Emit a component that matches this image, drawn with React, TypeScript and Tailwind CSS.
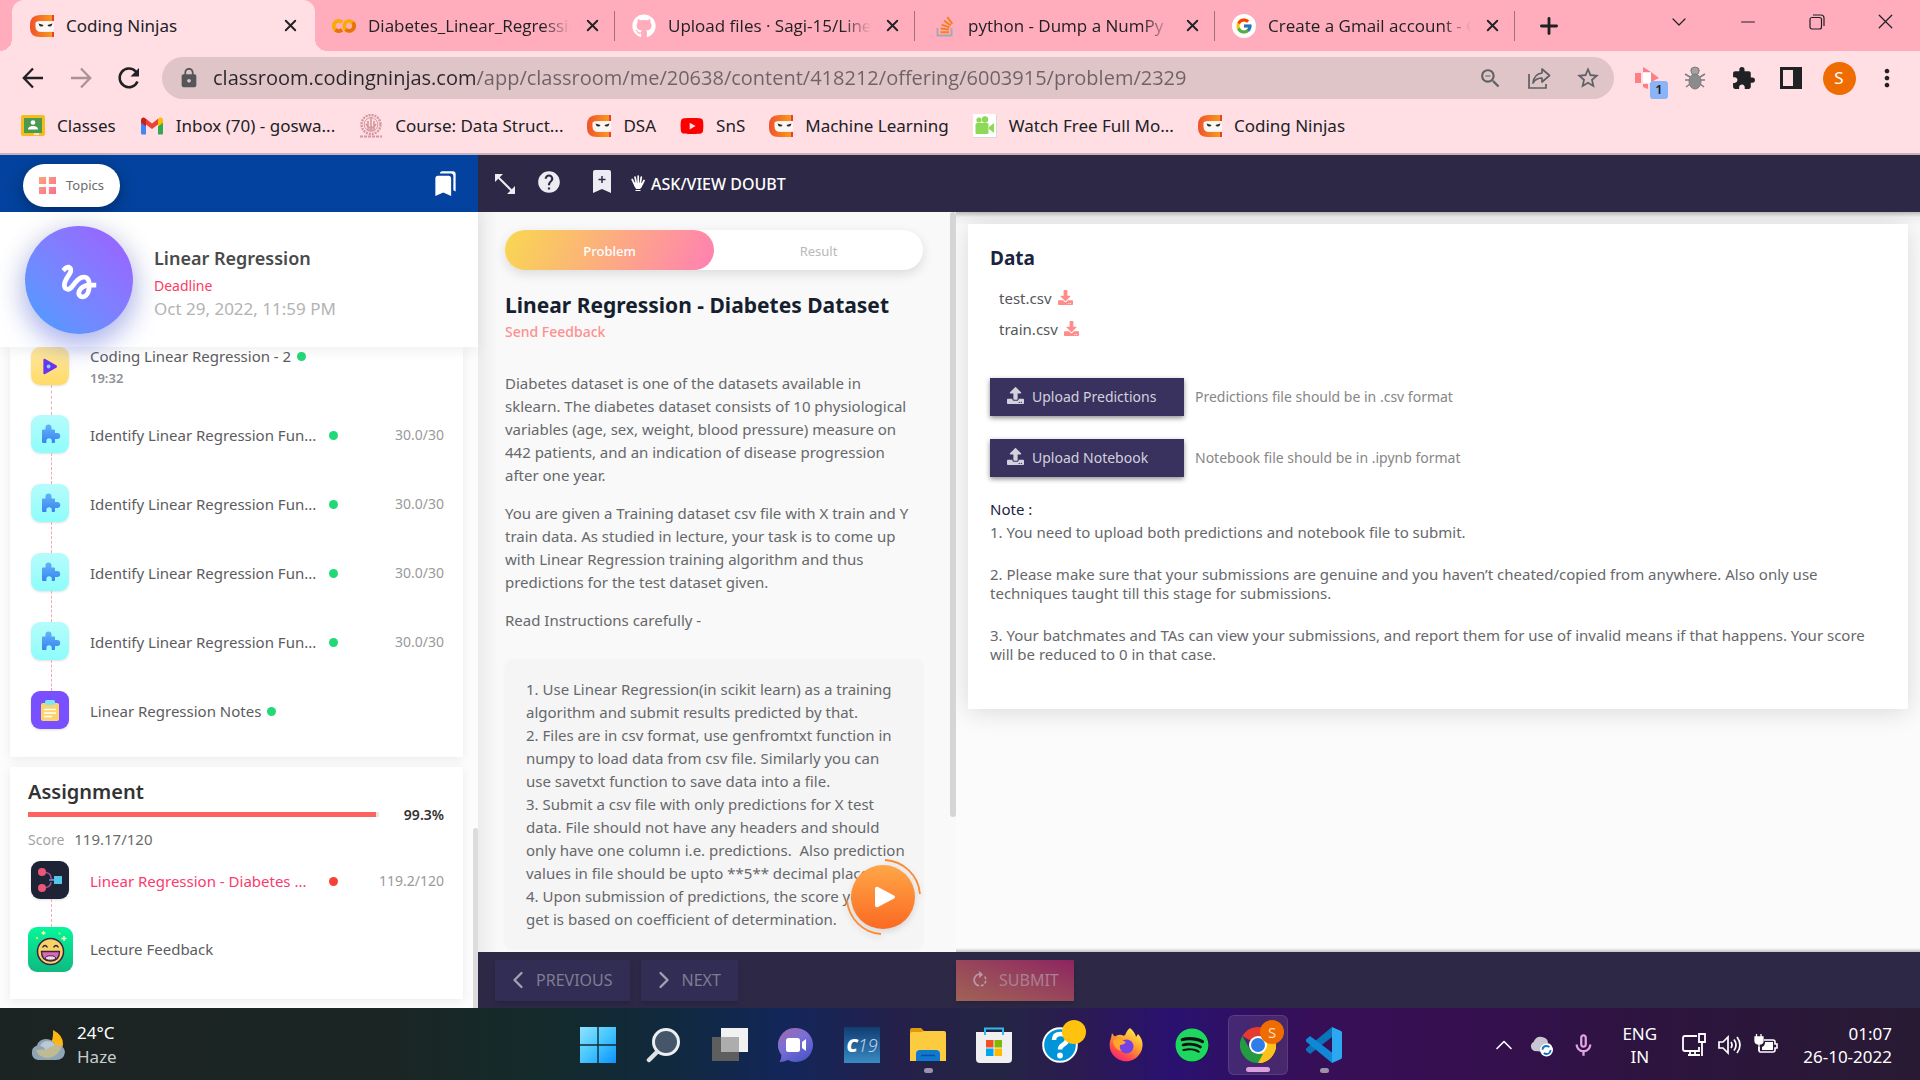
import type { ReactNode } from "react";
import { ChevronDown, ChevronLeft, ChevronRight, ChevronUp, Minus, Plus, X } from "lucide-react";
import { FaDownload, FaGithub, FaSpotify, FaUpload, FaYoutube } from "react-icons/fa";
import { FcGoogle } from "react-icons/fc";
import {
  MdBookmarks,
  MdExtension,
  MdGesture,
  MdHelp,
  MdLock,
  MdMoreVert,
  MdOutlineMicNone,
  MdOutlineZoomOut,
  MdRotateRight,
  MdStarBorder,
} from "react-icons/md";

/* ---------- Favicons ---------- */

function NinjaIcon() {
  return (
    <svg viewBox="0 0 24 24" className="size-6 shrink-0" aria-hidden="true">
      <defs>
        <linearGradient id="ninja" x1="0" x2="1">
          <stop offset="0" stopColor="#f0512b" />
          <stop offset="1" stopColor="#f9a01b" />
        </linearGradient>
      </defs>
      <path d="M24 1H10Q0 1 0 11v3q0 9 10 9h14v-5H11q-5 0-5-5v-2q0-4 5-4h13z" fill="url(#ninja)" />
      <path d="M22 1h2v6h-2zM22 18h2v5h-2z" fill="#e8402c" />
      <path d="M5.500 9q0-1.500 2-1.500h16.500v8q-1 2-3 2H11q-5.500 0-5.500-5z" fill="#fdf7f4" />
      <path d="M8.500 9.500l5 1.500q-.5 1.800-2.500 1.600-2-.4-2.500-3.100zM22.500 9.500l-5 1.500q.5 1.800 2.500 1.600 2-.4 2.500-3.100z" fill="#2b2b2b" />
    </svg>
  );
}

function ColabIcon() {
  return (
    <svg viewBox="0 0 24 24" className="size-6 shrink-0" fill="none" strokeWidth="3.800" aria-hidden="true">
      <path d="M10 8.200a5 5 0 1 0 0 7.600" stroke="#f9ab00" />
      <path d="M3.500 15.800A5 5 0 0 0 10 15.800" stroke="#e8710a" />
      <circle cx="17.200" cy="12" r="4.900" stroke="#f9ab00" />
      <path d="M13.700 15.500a4.900 4.900 0 0 0 7-7" stroke="#e8710a" />
    </svg>
  );
}

function StackOverflowIcon() {
  return (
    <svg viewBox="0 0 24 24" className="size-6 shrink-0" fill="none" aria-hidden="true">
      <path d="M5.500 14v7.500h14V14" stroke="#a8a8ad" strokeWidth="2" />
      <path d="M8.500 18.200h8.500M8.600 14.500l8.400 1M9.600 10.600l8 2.800M12 6.600l6.800 4.900M15.300 3l5 6.800" stroke="#f48024" strokeWidth="2" />
    </svg>
  );
}

function ClassroomIcon() {
  return (
    <svg viewBox="0 0 24 24" className="size-6 shrink-0" aria-hidden="true">
      <rect y="1" width="24" height="21" rx="2" fill="#f6bc1c" />
      <rect x="3" y="4" width="18" height="15" fill="#4c9a50" />
      <circle cx="12" cy="8.500" r="2.300" fill="#fff" />
      <path d="M7 15.500q0-3.500 5-3.500t5 3.500z" fill="#fff" />
      <path d="M13 19h5v2h-5z" fill="#e6e6e6" />
    </svg>
  );
}

function GmailIcon() {
  return (
    <svg viewBox="0 0 24 24" className="size-6 shrink-0" aria-hidden="true">
      <path d="M1 6v13.500q0 1 1 1h4V10z" fill="#4285f4" />
      <path d="M23 6v13.500q0 1-1 1h-4V10z" fill="#34a853" />
      <path d="M6 10.500V4.800l6 4.600 6-4.600v5.700L12 15z" fill="#ea4335" />
      <path d="M1 6.500v2.300l5 3.700V4.800L4.600 3.900C3 2.900 1 4 1 6.500z" fill="#c5221f" />
      <path d="M23 6.500v2.300l-5 3.700V4.800l1.400-.9C21 2.900 23 4 23 6.500z" fill="#fbbc04" />
    </svg>
  );
}

function CrestIcon() {
  return (
    <svg viewBox="0 0 24 24" className="size-6 shrink-0" fill="none" stroke="#d5969e" aria-hidden="true">
      <circle cx="12" cy="10.500" r="9.500" strokeWidth="2.400" strokeDasharray="2 1" />
      <circle cx="12" cy="10.500" r="6.800" />
      <path d="M12 3v13M9 7v8M15 7v8M7 10q5 8 10 0M8 16h8" strokeWidth="1.600" />
      <path d="M1 22.500h22" strokeWidth="1.800" strokeDasharray="3 1" />
    </svg>
  );
}

function CameraIcon() {
  return (
    <svg viewBox="0 0 24 24" className="size-6 shrink-0" aria-hidden="true">
      <path d="M0 0h24v24H0z" fill="#d9d9d9" />
      <path d="M0 0h23v23H0z" fill="#fff" />
      <g fill="#8ed857">
        <circle cx="6" cy="6" r="2.600" />
        <circle cx="12" cy="5.500" r="3.200" />
        <rect x="2.500" y="9" width="13" height="11" rx="1.500" />
        <path d="M16 13l5-4v10l-5-4z" />
      </g>
    </svg>
  );
}

/* ---------- Browser chrome ---------- */

const tabs: { title: string; icon: ReactNode }[] = [
  { title: "Diabetes_Linear_Regressio", icon: <ColabIcon /> },
  { title: "Upload files · Sagi-15/Line", icon: <FaGithub className="size-6 shrink-0 text-white" /> },
  { title: "python - Dump a NumPy", icon: <StackOverflowIcon /> },
  {
    title: "Create a Gmail account - G",
    icon: (
      <span className="flex size-6 shrink-0 items-center justify-center rounded-full bg-white">
        <FcGoogle className="size-[18px]" />
      </span>
    ),
  },
];

const bookmarks: { title: string; icon: ReactNode }[] = [
  { title: "Classes", icon: <ClassroomIcon /> },
  { title: "Inbox (70) - goswa...", icon: <GmailIcon /> },
  { title: "Course: Data Struct...", icon: <CrestIcon /> },
  { title: "DSA", icon: <NinjaIcon /> },
  { title: "SnS", icon: <FaYoutube className="size-6 shrink-0 text-[#ff0000]" /> },
  { title: "Machine Learning", icon: <NinjaIcon /> },
  { title: "Watch Free Full Mo...", icon: <CameraIcon /> },
  { title: "Coding Ninjas", icon: <NinjaIcon /> },
];

function TabStrip() {
  return (
    <div className="flex h-[51px] bg-[#ffadbc] pl-3">
      <div className="relative flex w-[303px] shrink-0 items-center gap-3 rounded-t-xl bg-[#ffdee4] pl-[18px] pr-[15px]">
        <span className="absolute bottom-0 -left-3 size-3 bg-[radial-gradient(circle_at_0_0,#ffadbc_12px,#ffdee4_12px)]" />
        <span className="absolute bottom-0 -right-3 size-3 bg-[radial-gradient(circle_at_100%_0,#ffadbc_12px,#ffdee4_12px)]" />
        <NinjaIcon />
        <span className="flex-1 text-[17px]">Coding Ninjas</span>
        <button aria-label="Close tab"><X className="size-[19px]" strokeWidth={2.400} /></button>
      </div>
      {tabs.map((t) => (
        <div key={t.title} className="flex w-[300px] shrink-0 items-center">
          <div className="flex min-w-0 flex-1 items-center pl-[17px] pr-3">
            {t.icon}
            <span className="ml-3 mr-2 flex-1 overflow-hidden whitespace-nowrap font-['Open_Sans',sans-serif] text-[17px] [mask-image:linear-gradient(to_right,#000_84%,transparent_98%)]">
              {t.title}
            </span>
            <button aria-label="Close tab"><X className="size-[19px]" strokeWidth={2.400} /></button>
          </div>
          <span className="h-[30px] w-px bg-[#a0707c]" />
        </div>
      ))}
      <button aria-label="New tab" className="ml-[21px]"><Plus className="size-[26px]" strokeWidth={2.600} /></button>
      <div className="ml-auto flex h-[43px] items-center">
        <button aria-label="Search tabs" className="flex w-[69px] justify-center">
          <ChevronDown className="size-6" strokeWidth={1.200} />
        </button>
        <button aria-label="Minimize" className="flex w-[69px] justify-center"><Minus className="size-[22px]" strokeWidth={1.200} /></button>
        <button aria-label="Restore" className="flex w-[69px] justify-center">
          <svg viewBox="0 0 16 16" className="size-4" fill="none" stroke="currentColor" strokeWidth="1.200">
            <rect x="1" y="3.500" width="11.500" height="11.500" rx="2" />
            <path d="M4 1h8q3 0 3 3v8" />
          </svg>
        </button>
        <button aria-label="Close" className="flex w-[69px] justify-center"><X className="size-[25px]" strokeWidth={1.200} /></button>
      </div>
    </div>
  );
}

function Toolbar() {
  return (
    <div className="flex h-[54px] items-center bg-[#ffdee4]">
      <div className="flex w-[162px] shrink-0 items-center justify-between pl-[21px] pr-[21px]">
        <button aria-label="Back">
          <svg viewBox="0 0 24 24" className="size-6" fill="none" stroke="currentColor" strokeWidth="2.300"><path d="M22 12H3M12 2.500L2.800 12l9.200 9.500" /></svg>
        </button>
        <button aria-label="Forward" className="text-[#ab9298]">
          <svg viewBox="0 0 24 24" className="size-6" fill="none" stroke="currentColor" strokeWidth="2.300"><path d="M2 12h19M12 2.500l9.200 9.500-9.200 9.500" /></svg>
        </button>
        <button aria-label="Reload">
          <svg viewBox="0 0 24 24" className="size-6" fill="none" stroke="currentColor" strokeWidth="2.500">
            <path d="M20.500 15.500A9.300 9.300 0 1 1 18.600 5.400l2 2.200" />
            <path d="M22 2v8.500h-8.500z" fill="currentColor" stroke="none" />
          </svg>
        </button>
      </div>
      <div className="flex h-[42px] min-w-0 flex-1 items-center rounded-full bg-[#dfc4c8] pl-4 pr-[13px] text-[#5f6064]">
        <MdLock className="size-[22px] shrink-0 text-[#54565a]" />
        <input
          aria-label="Address"
          defaultValue="classroom.codingninjas.com/app/classroom/me/20638/content/418212/offering/6003915/problem/2329"
          className="ml-[13px] min-w-0 flex-1 bg-[linear-gradient(to_right,#2b2629_262px,#6e6266_262px)] bg-clip-text font-['Open_Sans',sans-serif] text-xl text-transparent outline-none"
        />
        <div className="flex items-center gap-6">
          <button aria-label="Zoom"><MdOutlineZoomOut className="size-[25px]" /></button>
          <button aria-label="Share">
            <svg viewBox="0 0 24 24" className="size-6" fill="none" stroke="currentColor" strokeWidth="1.700">
              <path d="M2 8v14h17v-4" />
              <path d="M15 7V3l7.500 6.500L15 16v-4q-6 0-9 5 1-9 9-10z" strokeLinejoin="round" />
            </svg>
          </button>
          <button aria-label="Bookmark this page"><MdStarBorder className="size-[26px]" /></button>
        </div>
      </div>
      <div className="flex shrink-0 items-center pl-[9px] pr-[9px]">
        <button aria-label="Recorder extension" className="relative flex w-12 justify-center">
          <svg viewBox="0 0 24 24" className="size-6">
            <path d="M0 7h6v10H0zM8 1l8 5H8zM8 18h5v5l-5-2z" fill="#ff7d85" />
            <path d="M8 7h8v10H8z" fill="#fff" />
            <path d="M16 6l8 6-8 4z" fill="#ff7d85" />
          </svg>
          <span className="absolute -bottom-[9px] left-[27px] flex h-[18px] w-[18px] items-center justify-center rounded-[3px] bg-[#8ab4f8] text-[13px] font-semibold">1</span>
        </button>
        <button aria-label="Debug extension" className="flex w-12 justify-center">
          <svg viewBox="0 0 24 24" className="size-6" stroke="#7d7d7d">
            <path d="M2 8l5 3M2 14h5M3 21l4-3M22 8l-5 3M22 14h-5M21 21l-4-3M9 2L8 5M15 2l1 3" fill="none" strokeWidth="1.500" />
            <circle cx="12" cy="5" r="4" fill="#a3a3a3" />
            <ellipse cx="12" cy="15.500" rx="6" ry="7.500" fill="#8b8b8b" />
          </svg>
        </button>
        <button aria-label="Extensions" className="flex w-12 justify-center"><MdExtension className="size-[25px]" /></button>
        <button aria-label="Side panel" className="flex w-12 justify-center">
          <svg viewBox="0 0 22 22" className="size-[22px]"><path d="M0 0h22v22H0zM3 3v16h10V3z" fill="currentColor" fillRule="evenodd" /></svg>
        </button>
        <button aria-label="Profile" className="flex w-12 justify-center">
          <span className="flex size-[33px] items-center justify-center rounded-full bg-[#ef6c00] text-[17px] text-white">S</span>
        </button>
        <button aria-label="Menu" className="flex w-12 justify-center"><MdMoreVert className="size-7" /></button>
      </div>
    </div>
  );
}

function BookmarkBar() {
  return (
    <nav className="flex h-[50px] items-start gap-6 overflow-hidden whitespace-nowrap border-b-2 border-[#c6b3bb] bg-[#ffdee4] pl-[21px] pt-2">
      {bookmarks.map((b, i) => (
        <a key={i} href="#" className="flex items-center gap-3 text-[17px]">
          {b.icon}
          {b.title}
        </a>
      ))}
    </nav>
  );
}

/* ---------- Sidebar ---------- */

function VideoTile() {
  return (
    <span className="flex size-[38px] items-center justify-center rounded-[9px] bg-linear-to-b from-[#ffeaa0] to-[#ffda65] shadow-sm">
      <svg viewBox="0 0 16 18" className="h-[17px] w-4">
        <path d="M1 2q0-2 2-1l12 7q1 1 0 2L3 17q-2 1-2-1z" fill="#6a35f0" />
        <circle cx="6.500" cy="9" r="2" fill="#7dd8ff" />
      </svg>
    </span>
  );
}

function PuzzleTile() {
  return (
    <span className="flex size-[38px] items-center justify-center rounded-[9px] bg-linear-to-b from-[#b5fcfb] to-[#8cfdfb] shadow-sm">
      <svg viewBox="0 0 20 20" className="ml-0.5 size-5">
        <defs>
          <linearGradient id="pz" x1="0" x2="0" y1="0" y2="1">
            <stop offset="0" stopColor="#62b4fb" />
            <stop offset="1" stopColor="#3b83ef" />
          </linearGradient>
        </defs>
        <path d="M1 6.500q0-1 1-1h2.500V3.500a3 3 0 0 1 6 0v2H13q1 0 1 1V9h2.200a3 3 0 0 1 0 6H14v3q0 1-1 1h-2.200v-2a2.700 2.700 0 0 0-5.400 0v2H2q-1 0-1-1z" fill="url(#pz)" />
      </svg>
    </span>
  );
}

function NotesTile() {
  return (
    <span className="flex size-[38px] items-center justify-center rounded-[9px] bg-[#7950ff] shadow-sm">
      <svg viewBox="0 0 18 21" className="h-[21px] w-[18px]">
        <rect y="3" width="18" height="18" rx="2" fill="#fcd46b" />
        <rect x="4" width="10" height="5" rx="1.500" fill="#7ce6fb" />
        <path d="M3 9.500h12M3 13h12M3 16.500h8" stroke="#fff" strokeWidth="1.600" />
      </svg>
    </span>
  );
}

function GraphTile() {
  return (
    <span className="flex size-[38px] items-center justify-center rounded-[9px] bg-[#1e2436] shadow-sm">
      <svg viewBox="0 0 26 26" className="size-[26px]" fill="none">
        <path d="M5 5q9 0 9 6 0 2 5 2M5 21q9 0 9-6" stroke="#b0489a" strokeWidth="1.500" />
        <path d="M12 13h8" stroke="#4aa3e0" strokeWidth="1.500" />
        <circle cx="5" cy="5" r="4" fill="#ef5676" />
        <circle cx="5" cy="21" r="4" fill="#ef5676" />
        <rect x="17" y="9" width="8" height="8" fill="#55c6e8" />
      </svg>
    </span>
  );
}

function FeedbackTile() {
  return (
    <svg viewBox="0 0 45 45" className="size-[45px] rounded-[9px]">
      <defs>
        <linearGradient id="fb" x1="0" x2="0" y1="0" y2="1">
          <stop offset="0" stopColor="#04f79b" />
          <stop offset="1" stopColor="#10b981" />
        </linearGradient>
      </defs>
      <path d="M0 0h45v45H0z" fill="url(#fb)" />
      <circle cx="22.500" cy="24.500" r="13" fill="#f7d264" stroke="#3d2240" strokeWidth="1.500" />
      <path d="M14.500 20.500q2.500-4 5 0M25.500 20.500q2.500-4 5 0" stroke="#3d2240" strokeWidth="1.400" fill="none" />
      <path d="M13.500 24.500h18q0 9.500-9 9.500t-9-9.500z" fill="#d76bb5" stroke="#3d2240" strokeWidth="1.400" />
      <ellipse cx="22.500" cy="31" rx="5" ry="2.200" fill="#f5d9e8" stroke="#3d2240" />
      <path d="M15.500 4v4M13.500 6h4M36 9v5M33.500 11.500h5" stroke="#f5fbb0" strokeWidth="1.400" />
      <circle cx="9" cy="11" r="1.200" fill="#c8f55a" />
      <circle cx="31.500" cy="6.500" r="1" fill="#c8f55a" />
    </svg>
  );
}

type Item = { title: string; tile: ReactNode; time?: string; score?: string };

const items: Item[] = [
  { title: "Coding Linear Regression - 2", tile: <VideoTile />, time: "19:32" },
  ...[1, 2, 3, 4].map(() => ({
    title: "Identify Linear Regression Fun...",
    tile: <PuzzleTile />,
    score: "30.0/30",
  })),
  { title: "Linear Regression Notes", tile: <NotesTile /> },
];

function LessonRow({ item, last }: { item: Item; last: boolean }) {
  return (
    <li className="flex">
      <div className="flex w-[59px] flex-col items-start">
        {item.tile}
        {!last && (
          <span className={item.time ? "ml-5 h-[30px] border-l border-dashed border-[#f4a9ae]" : "ml-5 h-[31px] border-l border-dashed border-[#f4a9ae]"} />
        )}
      </div>
      <a href="#" className="flex h-10 flex-1 items-center text-[#5b5c60]">
        <span>
          <span className="flex items-center text-[15px] leading-[22px]">
            <span className={item.score ? "w-[239px] whitespace-nowrap" : "mr-[6px] whitespace-nowrap"}>{item.title}</span>
            <span className="size-[9px] rounded-full bg-[#22d978]" />
          </span>
          {item.time && <span className="block text-[13px] leading-[22px] font-semibold text-[#8f8f96]">{item.time}</span>}
        </span>
        {item.score && <span className="ml-auto text-sm text-[#9a9a9a]">{item.score}</span>}
      </a>
    </li>
  );
}

function Sidebar() {
  return (
    <aside className="flex min-h-0 flex-col bg-[#fcfcfc]">
      <div className="flex h-[57px] shrink-0 items-center justify-between bg-[#03439f] pl-[23px] pr-[19px]">
        <button className="mt-1 flex h-[43px] items-center gap-[10px] rounded-full bg-white px-4 text-[13px] text-[#6b6b6b] shadow-[0_4px_16px_rgba(0,0,0,0.35)]">
          <svg viewBox="0 0 18 18" className="size-[17px]">
            <defs>
              <linearGradient id="tp" x1="0" x2="1" y1="0" y2="1">
                <stop offset="0" stopColor="#fba37a" />
                <stop offset="1" stopColor="#fb6f92" />
              </linearGradient>
            </defs>
            <path d="M0 0h7.500v7.500H0zM10.500 0H18v7.500h-7.500zM0 10.500h7.500V18H0zM10.500 10.500H18V18h-7.500z" fill="url(#tp)" />
          </svg>
          Topics
        </button>
        <button aria-label="Saved items" className="text-white"><MdBookmarks className="size-[27px]" /></button>
      </div>

      <div className="relative z-10 flex h-[135px] shrink-0 items-center bg-white pl-[25px] shadow-[0_4px_12px_rgba(0,0,0,0.06)]">
        <span className="flex size-[108px] items-center justify-center rounded-full bg-linear-to-tr from-[#3f9fff] to-[#9d5cff] text-white shadow-[0_12px_28px_rgba(90,110,255,0.4),0_4px_30px_rgba(0,0,0,0.15)]">
          <MdGesture className="mt-1 size-[46px]" />
        </span>
        <div className="ml-[21px] mt-1">
          <h2 className="text-lg leading-7 font-semibold text-[#4a4a4a]">Linear Regression</h2>
          <p className="mt-0.5 text-sm leading-6 text-[#ff3a62]">Deadline</p>
          <p className="text-[17px] leading-[22px] text-[#b3b3b3]">Oct 29, 2022, 11:59 PM</p>
        </div>
      </div>

      <div className="flex min-h-0 flex-1 overflow-hidden">
        <div className="min-w-0 flex-1 pl-[10px] pr-[10px]">
          <section className="bg-white pb-[26px] pl-[21px] pr-[19px] shadow-[0_2px_10px_rgba(0,0,0,0.07)]">
            <ul>
              {items.map((it, i) => (
                <LessonRow key={i} item={it} last={i === items.length - 1} />
              ))}
            </ul>
          </section>
          <section className="mt-[10px] bg-white pb-[27px] pl-[18px] pr-[19px] pt-[11px] shadow-[0_2px_10px_rgba(0,0,0,0.07)]">
            <h3 className="text-xl leading-7 font-semibold text-[#333]">Assignment</h3>
            <div className="flex h-[18px] items-center justify-between">
              <div className="mr-[25px] mb-[2px] h-[5px] flex-1 bg-[#e5e5e5]"><div className="h-full w-[99.3%] bg-[#ff625f]" /></div>
              <span className="text-sm font-semibold text-[#333]">99.3%</span>
            </div>
            <p className="mt-[3px] text-[15px] leading-6 text-[#6b6b6b]">
              <span className="mr-[10px] text-sm text-[#a3a3a3]">Score</span>119.17/120
            </p>
            <div className="flex pl-[3px] pt-[10px]">
              <div className="flex w-[59px] flex-col items-start">
                <GraphTile />
                <span className="ml-5 h-7 border-l border-dashed border-[#f4a9ae]" />
              </div>
              <a href="#" className="flex h-10 flex-1 items-center text-[15px] text-[#fb3a6e]">
                <span className="w-[239px] whitespace-nowrap">Linear Regression - Diabetes ...</span>
                <span className="size-[9px] rounded-full bg-[#f44336]" />
                <span className="ml-auto text-sm text-[#9a9a9a]">119.2/120</span>
              </a>
            </div>
            <a href="#" className="flex items-center gap-[17px] text-[15px] text-[#5b5c60]">
              <FeedbackTile />
              Lecture Feedback
            </a>
          </section>
        </div>
        <div className="flex w-[5px] flex-col justify-end"><span className="h-[180px] rounded-t bg-[#dcdcdc]" /></div>
      </div>
    </aside>
  );
}

/* ---------- Problem ---------- */

const intro = `Diabetes dataset is one of the datasets available in
sklearn. The diabetes dataset consists of 10 physiological
variables (age, sex, weight, blood pressure) measure on
442 patients, and an indication of disease progression
after one year.`;

const task = `You are given a Training dataset csv file with X train and Y
train data. As studied in lecture, your task is to come up
with Linear Regression training algorithm and thus
predictions for the test dataset given.`;

const instructions = `1. Use Linear Regression(in scikit learn) as a training
algorithm and submit results predicted by that.
2. Files are in csv format, use genfromtxt function in
numpy to load data from csv file. Similarly you can
use savetxt function to save data into a file.
3. Submit a csv file with only predictions for X test
data. File should not have any headers and should
only have one column i.e. predictions.  Also prediction
values in file should be upto **5** decimal places.
4. Upon submission of predictions, the score you
get is based on coefficient of determination.`;

function Problem() {
  return (
    <section className="relative flex min-h-0 overflow-hidden bg-[#f9f9f9] bg-[linear-gradient(to_right,#ececec,#f9f9f9_20px)]">
      <div className="min-w-0 flex-1 pl-[27px] pr-[27px] pt-[18px] text-[15px] text-[#66686b]">
        <div role="tablist" className="flex h-10 rounded-full bg-white text-[13px] shadow-[0_4px_12px_rgba(0,0,0,0.12)]">
          <button role="tab" aria-selected="true" className="flex-1 rounded-full bg-[linear-gradient(115deg,#f9d84f,#ff80b3)] pt-[3px] font-medium text-white">Problem</button>
          <button role="tab" aria-selected="false" className="flex-1 pt-[3px] text-[#b9b9b9]">Result</button>
        </div>
        <h1 className="mt-[19px] whitespace-nowrap text-[21px] leading-8 font-bold text-[#161f30]">Linear Regression - Diabetes Dataset</h1>
        <button className="block text-sm leading-[22px] font-medium text-[#ff8f8f]">Send Feedback</button>
        <p className="mt-[29px] whitespace-pre leading-[23px]">{intro}</p>
        <p className="mt-[15px] whitespace-pre leading-[23px]">{task}</p>
        <p className="mt-[15px] leading-[23px]">Read Instructions carefully -</p>
        <div className="mt-7 whitespace-pre rounded-lg bg-[#f5f5f5] py-[18px] pl-[21px] leading-[23px] shadow-[0_0_3px_rgba(0,0,0,0.04)]">{instructions}</div>
      </div>
      <div className="w-[6px]"><div className="h-[605px] rounded-full bg-[#d5d5d5]" /></div>
      <button aria-label="Play" className="absolute bottom-[15px] right-[33px]">
        <svg viewBox="0 0 80 80" className="size-20 drop-shadow-md">
          <defs>
            <linearGradient id="pl" x1="0" x2="0" y1="0" y2="1">
              <stop offset="0" stopColor="#ffa648" />
              <stop offset="1" stopColor="#fb6a21" />
            </linearGradient>
          </defs>
          <circle cx="40" cy="40" r="32" fill="url(#pl)" />
          <path d="M42 3A37 37 0 0 1 77 37" fill="none" stroke="#fb8a35" strokeWidth="1.800" />
          <path d="M4 43A37 37 0 0 0 38 77" fill="none" stroke="#fb8a35" strokeWidth="1.800" />
          <path d="M32 32q0-3 3-2l16 8.500q2 1.500 0 3L35 50q-3 1-3-2z" fill="#fff" />
        </svg>
      </button>
    </section>
  );
}

/* ---------- Submission ---------- */

function UploadRow({ label, hint }: { label: string; hint: string }) {
  return (
    <div className="flex items-center">
      <button className="flex h-[38px] w-[194px] shrink-0 items-center gap-2 bg-[#3a325e] pl-[17px] text-sm text-[#d3d1de] shadow-[0_2px_5px_rgba(0,0,0,0.45)]">
        <FaUpload className="mb-[3px] size-[17px]" />
        {label}
      </button>
      <span className="ml-[11px] text-sm text-[#868686]">{hint}</span>
    </div>
  );
}

function Submission() {
  return (
    <section className="min-h-0 overflow-hidden bg-[#fbfbfb] bg-[linear-gradient(to_bottom,#bcbcbe,#f0f0f0_5px,transparent_14px,transparent_calc(100%-4px),#c3c4c8)] px-3 pt-3">
      <div className="bg-white pl-[22px] pr-8 pt-[18px] pb-[45px] shadow-[0_2px_24px_rgba(0,0,0,0.14)]">
        <h2 className="text-[19px] leading-8 font-bold text-[#1a2440]">Data</h2>
        <ul className="mt-[9px] pl-[9px] text-[15px] leading-[31px] text-[#55575a]">
          {["test.csv", "train.csv"].map((f) => (
            <li key={f} className="h-[31px]">
              <a href="#" className="inline-flex items-center gap-[6px]">
                {f}
                <FaDownload className="mb-[3px] size-[15px] text-[#ff8b8b]" />
              </a>
            </li>
          ))}
        </ul>
        <div className="mt-[33px] flex flex-col gap-[23px]">
          <UploadRow label="Upload Predictions" hint="Predictions file should be in .csv format" />
          <UploadRow label="Upload Notebook" hint="Notebook file should be in .ipynb format" />
        </div>
        <h3 className="mt-5 text-[15px] leading-6 text-[#1a2440]">Note :</h3>
        <div className="flex flex-col gap-[23px] text-[15px] leading-[19px] text-[#66686b]">
          <p className="mt-[2px]">1. You need to upload both predictions and notebook file to submit.</p>
          <p>
            2. Please make sure that your submissions are genuine and you haven’t cheated/copied from anywhere. Also only use
            techniques taught till this stage for submissions.
          </p>
          <p>
            3. Your batchmates and TAs can view your submissions, and report them for use of invalid means if that happens. Your score
            will be reduced to 0 in that case.
          </p>
        </div>
      </div>
    </section>
  );
}

function Workspace() {
  return (
    <main className="flex min-h-0 min-w-0 flex-col">
      <div className="flex h-[57px] shrink-0 items-center bg-[#2c2846] pl-4 text-[#ececf2]">
        <button aria-label="Expand">
          <svg viewBox="0 0 22 22" className="size-[22px]">
            <path d="M1 1h8L1 9zM21 21h-8l8-8z" fill="currentColor" />
            <path d="M4 4l14 14" stroke="currentColor" strokeWidth="2" />
          </svg>
        </button>
        <button aria-label="Help" className="ml-[20px] mb-1"><MdHelp className="size-[26px]" /></button>
        <button aria-label="Bookmark problem" className="ml-[31px] mb-1">
          <svg viewBox="0 0 18 23" className="h-[23px] w-[18px]">
            <path d="M2 0h14q2 0 2 2v21l-9-4-9 4V2q0-2 2-2z" fill="currentColor" />
            <path d="M9 6v7M5.500 9.500h7" stroke="#2c2846" strokeWidth="1.500" />
          </svg>
        </button>
        <button className="ml-[20px] flex items-center gap-[6px] text-base font-medium text-white">
          <svg viewBox="0 0 14 16" className="mb-0.5 h-4 w-[14px]" aria-hidden="true">
            <path d="M1.200 4.500l2 4M4 2l1.300 6M7.200 1v7M10.300 2L9.300 8M13 5.500L11 9.500" stroke="#fff" strokeWidth="1.700" strokeLinecap="round" fill="none" />
            <path d="M2.300 7.500L11.800 8q-.3 4-2.800 6H5.200Q2.800 12 2.300 7.500z" fill="#fff" />
            <path d="M4.500 15.500h5" stroke="#fff" />
          </svg>
          ASK/VIEW DOUBT
        </button>
      </div>
      <div className="grid min-h-0 flex-1 grid-cols-[478fr_964fr]">
        <Problem />
        <Submission />
      </div>
      <footer className="grid h-14 shrink-0 grid-cols-[478fr_964fr] items-center bg-[#2c2846] text-base text-[#7f7c93]">
        <div className="flex gap-[11px] pl-[17px]">
          <button className="flex h-[41px] items-center gap-1 bg-[#322d54] pl-[9px] pr-[17px] shadow-md">
            <ChevronLeft className="size-7 text-[#a3a1b2]" />
            PREVIOUS
          </button>
          <button className="flex h-[41px] items-center gap-1 bg-[#322d54] pl-[9px] pr-[17px] shadow-md">
            <ChevronRight className="size-7 text-[#a3a1b2]" />
            NEXT
          </button>
        </div>
        <button className="flex h-[41px] w-[118px] items-center gap-[9px] bg-linear-to-tr from-[#a06254] to-[#8e2260] pl-[14px] text-[#aa8092] shadow-md">
          <MdRotateRight className="size-5 text-[#b99aa8]" />
          SUBMIT
        </button>
      </footer>
    </main>
  );
}

/* ---------- Taskbar ---------- */

const WindowsIcon = () => (
  <svg viewBox="0 0 36 36" className="size-9">
    <defs>
      <linearGradient id="win" x1="0" x2="1" y1="0" y2="1">
        <stop offset="0" stopColor="#8fe3ff" />
        <stop offset=".5" stopColor="#45c6ff" />
        <stop offset="1" stopColor="#0b93ff" />
      </linearGradient>
    </defs>
    <path d="M0 0h17.300v17.300H0zM18.700 0H36v17.300H18.700zM0 18.700h17.300V36H0zM18.700 18.700H36V36H18.700z" fill="url(#win)" />
  </svg>
);
const SearchIcon = () => (
  <svg viewBox="0 0 36 36" className="size-9">
    <circle cx="20" cy="15" r="12.500" fill="#46566a" stroke="#eceff1" strokeWidth="3" />
    <path d="M11 25l-8 8" stroke="#dfe2e4" strokeWidth="4.500" strokeLinecap="round" />
  </svg>
);
const TaskViewIcon = () => (
  <svg viewBox="0 0 36 36" className="size-9">
    <path d="M0 10h27v24H0z" fill="#5e5e5e" />
    <path d="M9 1h27v24H9z" fill="#f1f1f1" />
    <path d="M9 10h18v15H9z" fill="#adadad" />
  </svg>
);
const ChatIcon = () => (
  <svg viewBox="0 0 36 36" className="size-9">
    <defs>
      <linearGradient id="chat" x1="0" x2=".6" y1="0" y2="1">
        <stop offset="0" stopColor="#a667a8" />
        <stop offset=".5" stopColor="#7a6fd6" />
        <stop offset="1" stopColor="#5059c9" />
      </linearGradient>
    </defs>
    <path d="M18 1a17 17 0 1 1-8 32q-4 2-8.500 2 2-3 1.800-7A17 17 0 0 1 18 1z" fill="url(#chat)" />
    <rect x="8" y="11" width="14" height="14" rx="2.500" fill="#fff" />
    <path d="M24 15l4-3v12l-4-3z" fill="#fff" />
  </svg>
);
const CricketIcon = () => (
  <span className="flex size-9 items-center justify-center bg-linear-to-b from-[#123d72] to-[#3a8bc4] text-lg font-black text-white italic">
    C<span className="font-light text-[#b9d3ea]">19</span>
  </span>
);
const FolderIcon = () => (
  <svg viewBox="0 0 36 36" className="size-9">
    <path d="M0 3q0-2 2-2h9l4 4h-5v4H0z" fill="#e09a0b" />
    <path d="M0 7q0-2 2-2h9l3-1h20q2 0 2 2v28H0z" fill="#fdcb3f" />
    <path d="M6 34v-7q0-4 4-4h16q4 0 4 4v7z" fill="#0f79cf" />
    <path d="M11 28.500h14" stroke="#0a4f95" strokeWidth="1.500" />
  </svg>
);
const StoreIcon = () => (
  <svg viewBox="0 0 36 36" className="size-9">
    <path d="M9 8V1.500h18V8" fill="none" stroke="#35b6ee" strokeWidth="2" />
    <path d="M0 5h36v27q0 4-4 4H4q-4 0-4-4z" fill="#f0f0f0" />
    <path d="M9 5V8M27 5v3" stroke="#35b6ee" strokeWidth="2" />
    <path d="M10 13h7.500v7.500H10z" fill="#f25022" />
    <path d="M18.500 13H26v7.500h-7.500z" fill="#7fba00" />
    <path d="M10 21.500h7.500V29H10z" fill="#00a4ef" />
    <path d="M18.500 21.500H26V29h-7.500z" fill="#ffb900" />
  </svg>
);
const HelpIcon = () => (
  <span className="relative">
    <svg viewBox="0 0 36 36" className="size-9">
      <circle cx="18" cy="18" r="16.800" fill="#0095d9" stroke="#fff" strokeWidth="2" />
      <path d="M12 13q0-6 6.500-6T25 12.500q0 3-3.500 5t-3.500 5" fill="none" stroke="#fff" strokeWidth="4.500" />
      <circle cx="18" cy="28.500" r="2.900" fill="#fff" />
    </svg>
    <span className="absolute -top-[7px] left-5 size-6 rounded-full bg-[#ffc20e]" />
  </span>
);
const FirefoxIcon = () => (
  <svg viewBox="0 0 36 36" className="size-9">
    <defs>
      <linearGradient id="fx" x1=".8" x2=".2" y1="0" y2="1">
        <stop offset="0" stopColor="#fff44f" />
        <stop offset=".45" stopColor="#ff9a2e" />
        <stop offset=".75" stopColor="#ff4a4f" />
        <stop offset="1" stopColor="#f0207c" />
      </linearGradient>
    </defs>
    <path d="M22 1q5 4 6 9l2-3q5 5 4.500 12A16.500 16.500 0 1 1 3 11l1-5q1 2 3 3.500Q10 7 14 8q3 2 4-2 1-3 4-5z" fill="url(#fx)" />
    <circle cx="18.500" cy="19.500" r="7" fill="#7542e5" />
    <path d="M5 14q5-5 8-1l5 2q-2 3-6 3-1 4 2 6-8-1-9-10z" fill="#ffa62b" />
  </svg>
);
const SpotifyIcon = () => (
  <span className="flex size-[33px] items-center justify-center rounded-full bg-[#111]">
    <FaSpotify className="size-[34px] shrink-0 text-[#1ed760]" />
  </span>
);
const ChromeIcon = () => (
  <span className="relative">
    <svg viewBox="0 0 36 36" className="size-9">
      <path d="M18 18L2.400 9A18 18 0 0 1 33.600 9z" fill="#e33b2e" />
      <path d="M18 18l15.600-9A18 18 0 0 1 18 36z" fill="#fcc21b" />
      <path d="M18 9h15.600A18 18 0 0 1 18 36l8-13z" fill="#fcc21b" />
      <path d="M18 36A18 18 0 0 1 2.400 9L10 22.500q4 5 8 4.500l5 0z" fill="#249a41" />
      <circle cx="18" cy="18" r="9" fill="#fff" />
      <circle cx="18" cy="18" r="7" fill="#2f7de9" />
    </svg>
    <span className="absolute -top-[7px] left-5 flex size-6 items-center justify-center rounded-full bg-[#ef6c00] text-[15px] leading-6 text-[#fbdcc0]">S</span>
  </span>
);
const CodeIcon = () => (
  <svg viewBox="0 0 36 36" className="size-9">
    <path d="M26 0v10L4 27l-4-3.500v-2z" fill="#0a74ba" />
    <path d="M4 9l22 16.500V36L0 14.500v-2z" fill="#1188d6" />
    <path d="M26 0l9 4q1 .5 1 2v24q0 1.500-1 2l-9 4z" fill="#2ba8f0" />
  </svg>
);

const apps: { name: string; icon: ReactNode; state?: "open" | "active" }[] = [
  { name: "Start", icon: <WindowsIcon /> },
  { name: "Search", icon: <SearchIcon /> },
  { name: "Task view", icon: <TaskViewIcon /> },
  { name: "Chat", icon: <ChatIcon /> },
  { name: "Cricket 19", icon: <CricketIcon /> },
  { name: "File Explorer", icon: <FolderIcon />, state: "open" },
  { name: "Store", icon: <StoreIcon /> },
  { name: "Get Help", icon: <HelpIcon /> },
  { name: "Firefox", icon: <FirefoxIcon /> },
  { name: "Spotify", icon: <SpotifyIcon /> },
  { name: "Chrome", icon: <ChromeIcon />, state: "active" },
  { name: "Code", icon: <CodeIcon />, state: "open" },
];

function Taskbar() {
  return (
    <div className="grid h-[72px] shrink-0 grid-cols-[1fr_auto_1fr] items-center bg-[linear-gradient(to_right,#1c2423_0%,#1b2624_20%,#142a2b_28%,#10293e_35%,#13265a_41%,#25204a_47%,#232544_52%,#2b1b50_56%,#2a1170_61%,#360f58_68%,#360f50_76%,#2d143f_86%,#281a33_100%)] pt-0.5 text-white">
      <button className="flex items-center gap-[11px] pl-[30px] text-left text-[17px] leading-6">
        <svg viewBox="0 0 36 32" className="h-8 w-9">
          <path d="M23 1q10 5 10 14 0 3-2 6l-12-4q5-7 4-16z" fill="#fcb713" />
          <path d="M8 31a7.500 7.500 0 0 1-1-14.500Q9 10 16 10t9 6q9-1 10 7-1 8-9 8z" fill="#8fa4b5" />
          <path d="M10 17q4-7 12-4 3 2 3 4-7 1-9 5-2-5-6-5z" fill="#b9c9d8" />
          <path d="M6 21q10 0 14-3 6-3 12-2-3 12-14 13-9 0-12-8z" fill="#c9bf8c" opacity=".8" />
        </svg>
        <span>
          24°C
          <span className="block text-[#c9cccc]">Haze</span>
        </span>
      </button>
      <div className="flex pl-0.5">
        {apps.map((a) => (
          <button key={a.name} aria-label={a.name} className="flex w-[66px] justify-center">
            <span
              className={
                a.state === "active"
                  ? "relative flex size-[60px] items-center justify-center rounded-md border border-white/10 bg-white/10"
                  : "relative flex size-[60px] items-center justify-center"
              }
            >
              {a.icon}
              {a.state === "open" && <span className="absolute bottom-0.5 h-[5px] w-[9px] rounded-full bg-[#9a93ab]" />}
              {a.state === "active" && <span className="absolute bottom-0.5 h-[5px] w-6 rounded-full bg-[#dc9fe0]" />}
            </span>
          </button>
        ))}
      </div>
      <div className="flex items-center justify-end pr-7">
        <button aria-label="Hidden icons" className="flex w-9 justify-center"><ChevronUp className="size-7" strokeWidth={1.400} /></button>
        <button aria-label="OneDrive" className="flex w-[38px] justify-center">
          <svg viewBox="0 0 24 24" className="size-6">
            <path d="M5 18a5 5 0 0 1-.5-9Q7 3 13 4t6 6q4 1 4 5t-4 4z" fill="#c9c5d2" />
            <circle cx="17.500" cy="17" r="6.500" fill="#fff" />
            <circle cx="17.500" cy="17" r="4" fill="none" stroke="#1173c7" strokeWidth="1.800" strokeDasharray="9 3.500" />
          </svg>
        </button>
        <button aria-label="Microphone" className="flex w-[46px] justify-center"><MdOutlineMicNone className="size-[27px] text-[#e0a6e4]" /></button>
        <button className="w-[67px] text-center text-[17px] leading-[23px]">ENG<br />IN</button>
        <button aria-label="Network, volume and battery" className="flex w-[114px] items-center justify-center gap-3">
          <svg viewBox="0 0 24 24" className="size-6" fill="none" stroke="currentColor" strokeWidth="1.800">
            <path d="M15 3H3q-2 0-2 2v11q0 2 2 2h14v-4M6 22h12M8 18v4M13 18v4" />
            <path d="M17 1h6v8h-6zM20 9v14" />
          </svg>
          <svg viewBox="0 0 24 24" className="size-6" fill="none" stroke="currentColor" strokeWidth="1.700">
            <path d="M1 9h4l5-5v16l-5-5H1zM13 9q2 3 0 6M16 6.500q4 5.500 0 11M19 4q6 8 0 16" />
          </svg>
          <svg viewBox="0 0 24 24" className="size-6">
            <path d="M10 7h9q2 0 2 2v2h2v4h-2v2q0 2-2 2H6q-1 0-1-2v-3" fill="none" stroke="#fff" strokeWidth="1.600" />
            <path d="M11 9h8v8H8v-3q3-1 3-5z" fill="#fff" />
            <path d="M1 4h8v4q0 3-4 3T1 8zM2.500 1v3M7 1v3M5 11v7" fill="#fff" stroke="#fff" strokeWidth="1.300" />
          </svg>
        </button>
        <button className="ml-4 text-right text-[17px] leading-[23px]">01:07<br />26-10-2022</button>
      </div>
    </div>
  );
}

export default function App() {
  return (
    <div className="flex h-screen flex-col overflow-hidden bg-white font-['Noto_Sans',sans-serif] text-[#202124]">
      <header className="shrink-0">
        <TabStrip />
        <Toolbar />
        <BookmarkBar />
      </header>
      <div className="grid min-h-0 flex-1 grid-cols-[478fr_1442fr]">
        <Sidebar />
        <Workspace />
      </div>
      <Taskbar />
    </div>
  );
}
